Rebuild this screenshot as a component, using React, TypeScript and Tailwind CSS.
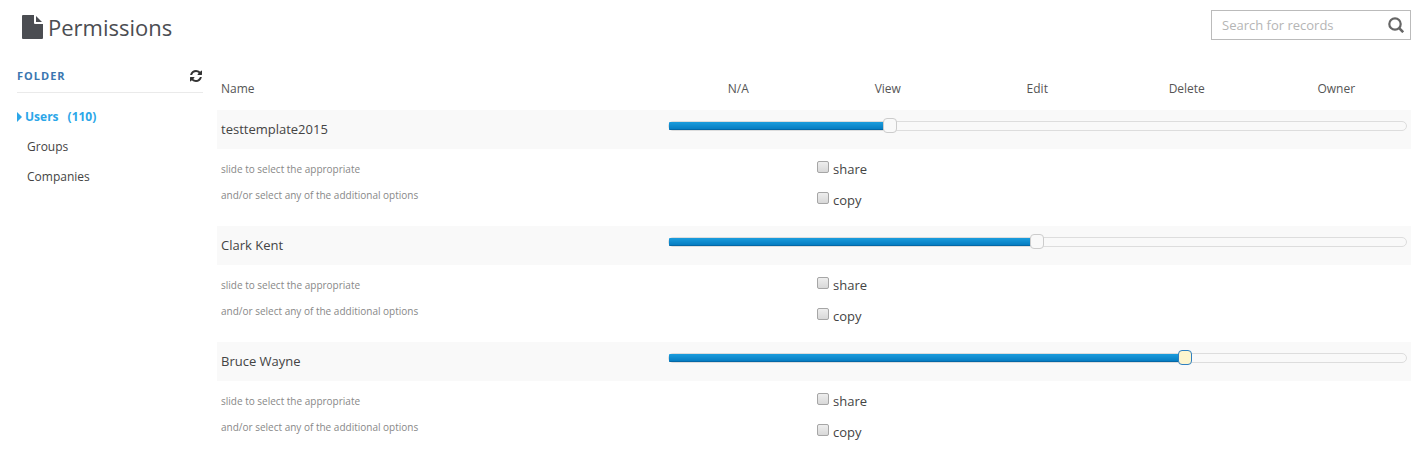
import { useState } from 'react';
import { clsx } from 'clsx';

const LEVELS = ['N/A', 'View', 'Edit', 'Delete', 'Owner'];

const USERS = [
  { id: 'testtemplate2015', name: 'testtemplate2015', level: 30 },
  { id: 'clark', name: 'Clark Kent', level: 50 },
  { id: 'bruce', name: 'Bruce Wayne', level: 70, active: true },
];

const FOLDERS = [
  { name: 'Users', count: 110 },
  { name: 'Groups' },
  { name: 'Companies' },
];

function FileIcon({ className }: { className?: string }) {
  return (
    <svg viewBox="0 0 21 24" fill="currentColor" aria-hidden="true" className={className}>
      <path d="M1 0h11v8q0 1 1 1h8v14q0 1-1 1H1q-1 0-1-1V1q0-1 1-1z" />
      <path d="M14 1l6 6h-6z" />
    </svg>
  );
}

function RefreshIcon({ className }: { className?: string }) {
  return (
    <svg viewBox="128 128 1536 1536" fill="currentColor" aria-hidden="true" className={className}>
      <path d="M1639 1056q0 5-1 7-64 268-268 434.500t-478 166.500q-146 0-282.500-55t-243.500-157l-129 129q-19 19-45 19t-45-19-19-45v-448q0-26 19-45t45-19h448q26 0 45 19t19 45-19 45l-137 137q71 66 161 102t187 36q134 0 250-65t186-179q11-17 53-117 8-23 30-23h192q13 0 22.500 9.500t9.500 22.500zm25-800v448q0 26-19 45t-45 19h-448q-26 0-45-19t-19-45 19-45l138-138q-148-137-349-137-134 0-250 65t-186 179q-11 17-53 117-8 23-30 23h-199q-13 0-22.500-9.500t-9.500-22.500v-7q65-268 270-434.500t480-166.500q146 0 284 55.500t245 156.500l130-129q19-19 45-19t45 19 19 45z" />
    </svg>
  );
}

function SearchIcon({ className }: { className?: string }) {
  return (
    <svg viewBox="0 0 16 16" fill="none" stroke="currentColor" aria-hidden="true" className={className}>
      <circle cx="7" cy="7" r="5.700" strokeWidth="2.200" />
      <path d="M11.200 11.200L15.200 15.200" strokeWidth="2.600" />
    </svg>
  );
}

/** Permission slider. The native input overhangs the track by half a thumb on each side. */
function LevelSlider({ label, initial, active }: { label: string; initial: number; active?: boolean }) {
  const [value, setValue] = useState(initial);

  return (
    <div className="relative h-[10px] rounded-[5px] border border-[#ddd] bg-[#f9f9f9]">
      <div
        className="h-2 rounded-l-[1px] border-b border-[#0568a6] bg-linear-to-b from-[#1b9ddd] to-[#067dc2]"
        style={{ width: `${value}%` }}
      />
      <input
        type="range"
        min={0}
        max={100}
        value={value}
        aria-label={`${label} permission level`}
        onChange={(e) => setValue(Number(e.target.value))}
        className={clsx(
          'absolute -top-1 -left-[7px] h-[15px] w-[calc(100%+14px)] cursor-pointer appearance-none bg-transparent outline-none',
          '[&::-webkit-slider-thumb]:h-[15px] [&::-webkit-slider-thumb]:w-[14px] [&::-webkit-slider-thumb]:appearance-none [&::-webkit-slider-thumb]:rounded-[4px] [&::-webkit-slider-thumb]:border',
          active
            ? '[&::-webkit-slider-thumb]:border-[#2f7fc0] [&::-webkit-slider-thumb]:bg-[#fdf5ce]'
            : '[&::-webkit-slider-thumb]:border-[#ccc] [&::-webkit-slider-thumb]:bg-[#f9f9f9]',
        )}
      />
    </div>
  );
}

function Option({ label }: { label: string }) {
  return (
    <label className="flex h-[31px] items-center gap-1">
      <input
        type="checkbox"
        className="mb-[6px] size-3 appearance-none rounded-[2px] border border-[#a6a6a6] bg-linear-to-b from-[#eee] to-[#d8d8d8] checked:from-[#1b9ddd] checked:to-[#067dc2]"
      />
      {label}
    </label>
  );
}

export default function App() {
  const [folder, setFolder] = useState('Users');

  return (
    <div className="pr-[14px] pl-[17px] font-['Open_Sans',sans-serif] text-[13px] text-[#444]">
      <header className="flex items-start justify-between pt-[10px]">
        <h1 className="flex h-[34px] items-center gap-[5px] pl-[5px] text-[22px] text-[#4b4d52]">
          <FileIcon className="h-6 w-[21px]" />
          Permissions
        </h1>
        <form role="search" className="flex h-[30px] w-[200px] items-center border border-[#bbb] pr-1 pl-[10px]">
          <input
            type="text"
            aria-label="Search for records"
            placeholder="Search for records"
            className="min-w-0 flex-1 pt-[2px] text-[13px] outline-none placeholder:text-[#b5b5b5]"
          />
          <button type="button" aria-label="Search" className="p-[2px] text-[#666]">
            <SearchIcon className="size-4" />
          </button>
        </form>
      </header>

      <div className="flex items-start gap-[14px] pt-6">
        <aside className="w-[186px] shrink-0">
          <div className="flex h-[25px] items-start justify-between border-b border-[#eaeaea]">
            <h2 className="text-[11px] leading-4 font-bold tracking-[1px] text-[#3a76b0]">FOLDER</h2>
            <button type="button" aria-label="Refresh" className="pt-[2px] pr-[1px] text-[#333]">
              <RefreshIcon className="size-3" />
            </button>
          </div>
          <nav className="flex flex-col pt-[9px] text-xs">
            {FOLDERS.map((f) => {
              const selected = f.name === folder;
              return (
                <a
                  key={f.name}
                  href="#"
                  onClick={() => setFolder(f.name)}
                  className={clsx('flex h-[30px] items-center', selected ? 'font-bold text-[#2ba6e8]' : 'pl-[10px]')}
                >
                  {selected && (
                    <svg viewBox="0 0 5 10" fill="currentColor" aria-hidden="true" className="mr-[3px] h-[10px] w-[5px]">
                      <path d="M0 0L5 5L0 10Z" />
                    </svg>
                  )}
                  {f.name}
                  {f.count && <span className="ml-[9px]">({f.count})</span>}
                </a>
              );
            })}
          </nav>
        </aside>

        <div className="min-w-0 flex-1">
          <table className="w-full table-fixed border-collapse">
            <colgroup>
              <col className="w-[37.4%]" />
              {LEVELS.map((level) => (
                <col key={level} />
              ))}
            </colgroup>
            <thead>
              <tr className="h-[42px] text-xs text-[#555]">
                <th className="px-1 text-left font-normal">Name</th>
                {LEVELS.map((level) => (
                  <th key={level} className="px-1 text-center font-normal">
                    {level}
                  </th>
                ))}
              </tr>
            </thead>
            {USERS.map((user) => (
              <tbody key={user.id}>
                <tr className="h-[39px] bg-[#f9f9f9]">
                  <td className="px-1">{user.name}</td>
                  <td colSpan={5} className="px-1 pt-[11px] align-top">
                    <LevelSlider label={user.name} initial={user.level} active={user.active} />
                  </td>
                </tr>
                <tr className="h-[77px] align-top">
                  <td className="px-1 pt-[7px] text-[10px] leading-[26px] text-[#888]">
                    <p>slide to select the appropriate</p>
                    <p>and/or select any of the additional options</p>
                  </td>
                  <td />
                  <td colSpan={4} className="px-1 pt-[5px]">
                    <Option label="share" />
                    <Option label="copy" />
                  </td>
                </tr>
              </tbody>
            ))}
          </table>
        </div>
      </div>
    </div>
  );
}
